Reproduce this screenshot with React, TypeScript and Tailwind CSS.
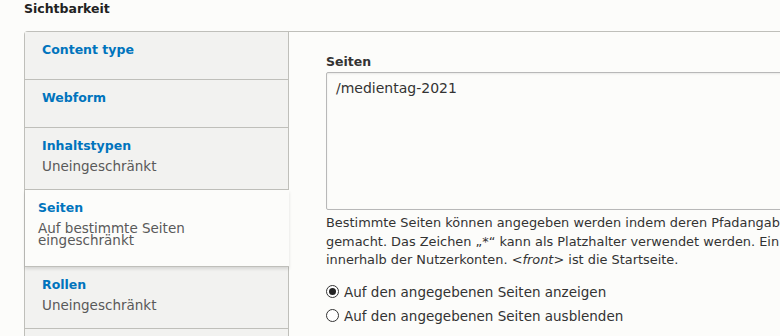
const TABS = [
  { title: "Content type", summary: [] as string[] },
  { title: "Webform", summary: [] },
  { title: "Inhaltstypen", summary: ["Uneingeschränkt"] },
  { title: "Seiten", summary: ["Auf bestimmte Seiten", "eingeschränkt"], active: true },
  { title: "Rollen", summary: ["Uneingeschränkt"] },
  { title: "Sprachen", summary: ["Uneingeschränkt"] },
];

function Radio({ checked }: { checked?: boolean }) {
  return (
    <span className="inline-flex h-[13px] w-[13px] shrink-0 items-center justify-center rounded-full border border-[#333] bg-white">
      {checked && <span className="h-[7px] w-[7px] rounded-full bg-[#222]" />}
    </span>
  );
}

export default function App() {
  return (
    <div className="h-[336px] w-[780px] overflow-hidden bg-[#fcfcfa] font-['DejaVu_Sans',sans-serif] text-[#222]">
      <h2 className="pl-[24px] text-[12.5px] font-bold leading-[18px]">Sichtbarkeit</h2>
      <div className="ml-[24px] mt-[13px] flex w-[900px] rounded-tl-[4px] border-l border-t border-[#bfbfba]">
        <ul className="w-[264px] shrink-0 border-r border-[#bfbfba] bg-[#f2f2f0]">
          {TABS.map((tab) =>
            tab.active ? (
              <li
                key={tab.title}
                className="relative z-10 -mr-[1px] h-[77px] border-b border-[#bfbfba] bg-[#fcfcfa] pl-[13px] pt-[8px] shadow-[0_2px_3px_rgba(0,0,0,0.12)]"
              >
                <div className="text-[12.5px] font-bold leading-[20px] text-[#0074bd]">{tab.title}</div>
                <div className="mt-[4px]">
                  {tab.summary.map((line) => (
                    <div key={line} className="text-[13.5px] leading-[12px] text-[#595959]">
                      {line}
                    </div>
                  ))}
                </div>
              </li>
            ) : (
              <li
                key={tab.title}
                className={`border-b border-[#bfbfba] pl-[17px] pt-[8px] ${tab.summary.length ? "h-[62px]" : "h-[48px]"}`}
              >
                <div className="text-[12.5px] font-bold leading-[20px] text-[#0074bd]">{tab.title}</div>
                {tab.summary.map((line) => (
                  <div key={line} className="mt-[1px] text-[13.5px] leading-[18px] text-[#595959]">
                    {line}
                  </div>
                ))}
              </li>
            )
          )}
        </ul>
        <div className="flex-1 pl-[37px] pt-[21px]">
          <label className="block text-[12.5px] font-bold leading-[18px] text-[#333]">Seiten</label>
          <div className="mt-[1px] h-[138px] w-[520px] rounded-[2px] border border-[#b8b8b8] bg-[#fcfcfa] px-[9px] pt-[5px] text-[14px] leading-[20px] text-[#333] shadow-[inset_0_1px_2px_rgba(0,0,0,0.08)]">
            /medientag-2021
          </div>
          <p className="mt-[4px] whitespace-nowrap text-[12.9px] leading-[18.5px] text-[#333]">
            Bestimmte Seiten können angegeben werden indem deren Pfadangaben zeilenweise eingegeben werden.
            <br />
            gemacht. Das Zeichen „*“ kann als Platzhalter verwendet werden. Ein Beispiel ist /user/* für alle Seiten
            <br />
            innerhalb der Nutzerkonten. <em>&lt;front&gt;</em> ist die Startseite.
          </p>
          <div className="mt-[13px] flex flex-col gap-[6px] text-[13.5px] leading-[18px] text-[#333]">
            <label className="flex items-center gap-[5px]">
              <Radio checked />
              Auf den angegebenen Seiten anzeigen
            </label>
            <label className="flex items-center gap-[5px]">
              <Radio />
              Auf den angegebenen Seiten ausblenden
            </label>
          </div>
        </div>
      </div>
    </div>
  );
}
